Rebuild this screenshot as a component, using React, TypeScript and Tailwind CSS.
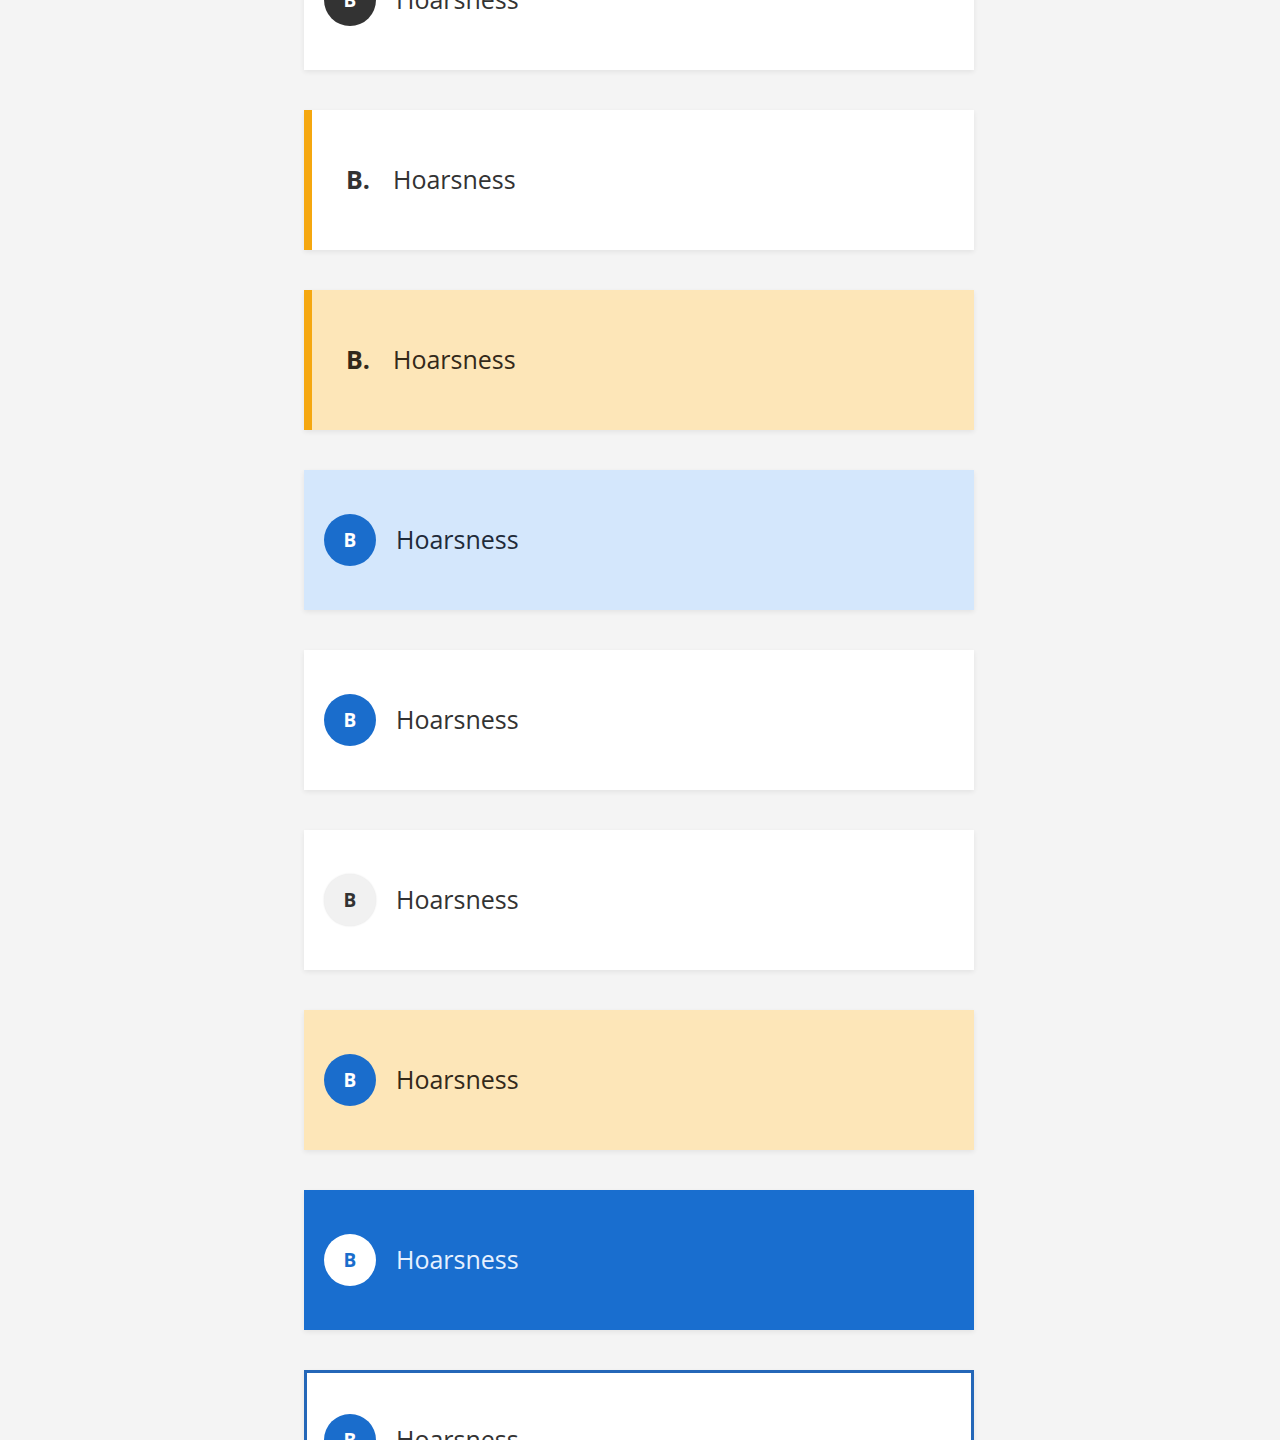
import React from "react";

const font = { fontFamily: '"Open Sans", "Noto Sans", sans-serif' };

function Circle({ variant }: { variant: "dark" | "blue" | "gray" | "white" }) {
  const cls =
    variant === "dark"
      ? "bg-[#333333] text-white"
      : variant === "blue"
      ? "bg-[#1a6dcc] text-white"
      : variant === "gray"
      ? "bg-[#f1f1f1] text-[#333333] shadow-[0_0_2px_rgba(0,0,0,0.12)]"
      : "bg-white text-[#1a6dcc]";
  return (
    <div
      className={`w-[52px] h-[52px] rounded-full flex items-center justify-center text-[19px] font-bold shrink-0 ${cls}`}
    >
      B
    </div>
  );
}

export default function App() {
  const shadow = "shadow-[0_2px_5px_rgba(0,0,0,0.07)]";
  return (
    <div className="min-h-[1440px] bg-[#f4f4f4] overflow-hidden" style={font}>
      <div className="w-[670px] mx-auto flex flex-col gap-10 -mt-[70px] relative left-[-1px]">
        {/* 1 dark */}
        <div className={`h-[140px] bg-white flex items-center pl-5 gap-[20px] ${shadow}`}>
          <Circle variant="dark" />
          <span className="text-[25px] text-[#333333]">Hoarsness</span>
        </div>
        {/* 2 orange border white */}
        <div className={`h-[140px] bg-white flex items-center border-l-[8px] border-[#f5a70f] pl-[34px] ${shadow}`}>
          <span className="text-[25px] font-bold text-[#333333] w-[47px]">B.</span>
          <span className="text-[25px] text-[#333333]">Hoarsness</span>
        </div>
        {/* 3 orange border yellow */}
        <div className={`h-[140px] bg-[#fde6b8] flex items-center border-l-[8px] border-[#f5a70f] pl-[34px] ${shadow}`}>
          <span className="text-[25px] font-bold text-[#33291a] w-[47px]">B.</span>
          <span className="text-[25px] text-[#33291a]">Hoarsness</span>
        </div>
        {/* 4 light blue */}
        <div className={`h-[140px] bg-[#d4e7fc] flex items-center pl-5 gap-[20px] ${shadow}`}>
          <Circle variant="blue" />
          <span className="text-[25px] text-[#1f2b3a]">Hoarsness</span>
        </div>
        {/* 5 white blue circle */}
        <div className={`h-[140px] bg-white flex items-center pl-5 gap-[20px] ${shadow}`}>
          <Circle variant="blue" />
          <span className="text-[25px] text-[#333333]">Hoarsness</span>
        </div>
        {/* 6 gray circle */}
        <div className={`h-[140px] bg-white flex items-center pl-5 gap-[20px] ${shadow}`}>
          <Circle variant="gray" />
          <span className="text-[25px] text-[#333333]">Hoarsness</span>
        </div>
        {/* 7 yellow */}
        <div className={`h-[140px] bg-[#fde6b8] flex items-center pl-5 gap-[20px] ${shadow}`}>
          <Circle variant="blue" />
          <span className="text-[25px] text-[#33291a]">Hoarsness</span>
        </div>
        {/* 8 blue */}
        <div className={`h-[140px] bg-[#196ecf] flex items-center pl-5 gap-[20px] ${shadow}`}>
          <Circle variant="white" />
          <span className="text-[25px] text-[#e6f1ff]">Hoarsness</span>
        </div>
        {/* 9 outlined */}
        <div className={`h-[140px] bg-white flex items-center border-[3px] border-[#2467b8] pl-[17px] gap-[20px] ${shadow}`}>
          <Circle variant="blue" />
          <span className="text-[25px] text-[#333333]">Hoarsness</span>
        </div>
      </div>
    </div>
  );
}
